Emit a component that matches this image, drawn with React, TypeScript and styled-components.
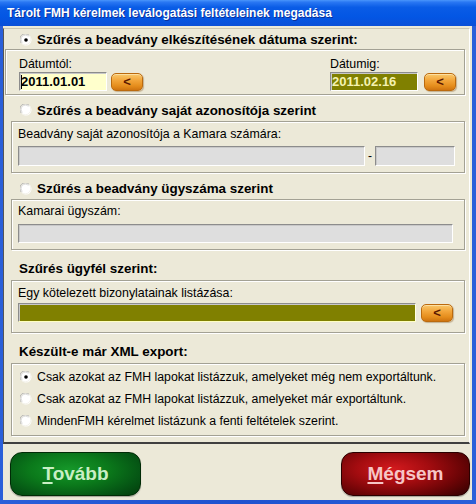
import * as React from "react"
import styled, { createGlobalStyle } from "styled-components"

const GlobalStyle = createGlobalStyle`
body {
    margin: 0;
    font-family: "Liberation Sans", Arial, sans-serif;
}
`

const Window = styled("div")`
width: 476px;
height: 504px;
display: flex;
flex-direction: column;
background: linear-gradient(to right, #2a5fd9, #1f52cf 50%, #2a5fd9);
overflow: hidden;
`

const TitleBar = styled("div")`
height: 26px;
display: flex;
align-items: center;
padding: 0 0 0 7px;
background: linear-gradient(to bottom, #4a96fb 0%, #2a78f3 8%, #0a5ce6 28%, #0356e4 65%, #0a4fd8 100%);
color: #fff;
font-weight: bold;
font-size: 12px;
text-shadow: 1px 1px 0 #0a2f9a;
box-sizing: border-box;
`

const Client = styled("div")`
flex: 1;
margin: 0 4px 4px 3px;
background: #ece9d8;
display: flex;
flex-direction: column;
`

const Panel = styled("div")`
margin: 2px 2px 0 0;
height: 416px;
box-sizing: border-box;
border-top: 1px solid #c9c5b4;
border-left: 1px solid #555;
border-right: 1px solid #fff;
border-bottom: 2px solid #404040;
display: flex;
flex-direction: column;
`

const Header = styled("div")<{ $h: number; $mt: number }>`
height: ${p => p.$h}px;
margin-top: ${p => p.$mt}px;
display: flex;
align-items: center;
gap: 5px;
padding-left: 16px;
font-weight: bold;
font-size: 13.4px;
color: #000;
white-space: nowrap;
`

const PlainHeader = styled(Header)`
padding-left: 15px;
`

const Group = styled("div")<{ $wide?: boolean; $pad: string; $h: number }>`
height: ${p => p.$h}px;
box-sizing: border-box;
margin: 0 4px 0 ${p => (p.$wide ? 1 : 7)}px;
padding: ${p => p.$pad};
border: 1px solid #a3a194;
box-shadow: inset 1px 1px 0 #fff, 1px 1px 0 #fff;
display: flex;
flex-direction: column;
`

const Label = styled("div")`
font-size: 12.4px;
line-height: 15px;
height: 15px;
color: #000;
white-space: nowrap;
`

const Row = styled("div")<{ $gap?: number; $mt?: number }>`
display: flex;
align-items: center;
gap: ${p => p.$gap ?? 4}px;
margin-top: ${p => p.$mt ?? 0}px;
`

const DateRow = styled("div")`
display: flex;
justify-content: space-between;
padding-right: 8px;
`

const Field = styled("div")<{ $tone: "yellow" | "olive" | "off"; $w?: number; $h: number }>`
height: ${p => p.$h}px;
width: ${p => (p.$w ? p.$w + "px" : "auto")};
flex: ${p => (p.$w ? "none" : "1")};
box-sizing: border-box;
border: 1px solid;
border-color: #8c8c8c #ffffff #ffffff #8c8c8c;
box-shadow: inset 1px 1px 0 #c8c8c8;
background: ${p => (p.$tone === "yellow" ? "#ffffcc" : p.$tone === "olive" ? "#808000" : "#dedede")};
color: ${p => (p.$tone === "olive" ? "#f4f2b0" : "#000")};
font-weight: bold;
font-size: 13px;
display: flex;
align-items: center;
padding-left: 1px;
`

const OliveLong = styled(Field)`
border-color: #8c8c8c #ffffe0 #ffffc0 #8c8c8c;
`

const Caret = styled("span")`
display: inline-block;
width: 1px;
height: 14px;
background: #000;
margin-right: -1px;
`

const Dash = styled("span")`
font-size: 12px;
width: 4px;
text-align: center;
`

const PickButton = styled("div")`
width: 32px;
height: 18px;
box-sizing: border-box;
border-radius: 5px;
border: 1px solid #bb6a0e;
background: linear-gradient(to bottom, #f9c86a 0%, #f2a53a 40%, #e58d1c 75%, #cf7410 100%);
box-shadow: 1px 1px 1px rgba(120, 70, 10, 0.35), inset 0 1px 0 rgba(255, 240, 200, 0.6);
color: #5a1800;
font-weight: bold;
font-size: 13px;
line-height: 16px;
text-align: center;
flex: none;
`

const OptionRow = styled("div")`
height: 22px;
display: flex;
align-items: center;
gap: 5px;
padding-left: 7px;
font-size: 12.3px;
color: #000;
white-space: nowrap;
`

const ButtonRow = styled("div")`
margin-top: 8px;
display: flex;
justify-content: space-between;
padding: 0 2px 0 7px;
`

const BigButton = styled("div")<{ $tone: "go" | "stop" }>`
width: ${p => (p.$tone === "go" ? 131 : 129)}px;
height: 44px;
box-sizing: border-box;
border-radius: 12px;
border: 1px solid ${p => (p.$tone === "go" ? "#012b06" : "#2a0000")};
background: ${p =>
    p.$tone === "go"
        ? "radial-gradient(ellipse 75% 90% at 45% 40%, #16982a 0%, #0b7a1b 40%, #055414 75%, #033a0b 100%)"
        : "radial-gradient(ellipse 75% 90% at 40% 38%, #d41a1e 0%, #a40c10 38%, #6c0406 72%, #3a0101 100%)"};
color: ${p => (p.$tone === "go" ? "#c9efc4" : "#f6c6c6")};
font-weight: bold;
font-size: 19px;
display: flex;
align-items: center;
justify-content: center;
box-shadow: 0 1px 1px rgba(0, 0, 0, 0.3);
u {
    text-decoration-thickness: 2px;
    text-underline-offset: 2px;
}
`

const Radio: React.FunctionComponent<{ checked?: boolean }> = ({ checked }) => (
    <svg width="12" height="12" viewBox="0 0 12 12" style={{ flex: "none" }}>
        <circle cx="6" cy="6" r="5.5" fill="#fff" />
        <path d="M1.4 9.2 A5 5 0 0 1 9.2 1.4" fill="none" stroke="#b4b4b4" strokeWidth="1" />
        <path d="M2.4 8.4 A4 4 0 0 1 8.4 2.4" fill="none" stroke="#dcdcdc" strokeWidth="1" />
        <path d="M9.2 1.4 A5 5 0 0 1 1.4 9.2" fill="none" stroke="#f4f2ea" strokeWidth="1" />
        {checked && <circle cx="6" cy="6" r="1.8" fill="#000" />}
    </svg>
)

export default function App() {
    return <>
        <GlobalStyle />
        <Window>
            <TitleBar>Tárolt FMH kérelmek leválogatási feltételeinek megadása</TitleBar>
            <Client>
                <Panel>
                    <Header $h={19} $mt={1}>
                        <Radio checked />
                        Szűrés a beadvány elkészítésének dátuma szerint:
                    </Header>
                    <Group $wide $h={46} $pad="7px 0 3px 13px">
                        <DateRow>
                            <div>
                                <Label>Dátumtól:</Label>
                                <Row>
                                    <Field $tone="yellow" $w={88} $h={19}><Caret />2011.01.01</Field>
                                    <PickButton>&lt;</PickButton>
                                </Row>
                            </div>
                            <div>
                                <Label>Dátumig:</Label>
                                <Row $gap={6}>
                                    <Field $tone="olive" $w={88} $h={19}>2011.02.16</Field>
                                    <PickButton>&lt;</PickButton>
                                </Row>
                            </div>
                        </DateRow>
                    </Group>

                    <Header $h={22} $mt={4}>
                        <Radio />
                        Szűrés a beadvány saját azonosítója szerint
                    </Header>
                    <Group $h={52} $pad="5px 9px 0 6px">
                        <Label>Beadvány saját azonosítója a Kamara számára:</Label>
                        <Row $mt={4} $gap={3}>
                            <Field $tone="off" $h={20} />
                            <Dash>-</Dash>
                            <Field $tone="off" $w={80} $h={20} />
                        </Row>
                    </Group>

                    <Header $h={21} $mt={5}>
                        <Radio />
                        Szűrés a beadvány ügyszáma szerint
                    </Header>
                    <Group $h={51} $pad="4px 11px 0 6px">
                        <Label>Kamarai ügyszám:</Label>
                        <Row $mt={5}>
                            <Field $tone="off" $h={19} />
                        </Row>
                    </Group>

                    <PlainHeader $h={23} $mt={7}>Szűrés ügyfél szerint:</PlainHeader>
                    <Group $h={53} $pad="5px 11px 0 6px">
                        <Label>Egy kötelezett bizonylatainak listázása:</Label>
                        <Row $mt={2} $gap={5}>
                            <OliveLong $tone="olive" $h={19} />
                            <PickButton>&lt;</PickButton>
                        </Row>
                    </Group>

                    <PlainHeader $h={23} $mt={7}>Készült-e már XML export:</PlainHeader>
                    <Group $h={73} $pad="2px 0 0 1px">
                        <OptionRow><Radio checked />Csak azokat az FMH lapokat listázzuk, amelyeket még nem exportáltunk.</OptionRow>
                        <OptionRow><Radio />Csak azokat az FMH lapokat listázzuk, amelyeket már exportáltunk.</OptionRow>
                        <OptionRow><Radio />MindenFMH kérelmet listázunk a fenti feltételek szerint.</OptionRow>
                    </Group>
                </Panel>
                <ButtonRow>
                    <BigButton $tone="go"><span><u>T</u>ovább</span></BigButton>
                    <BigButton $tone="stop"><span><u>M</u>égsem</span></BigButton>
                </ButtonRow>
            </Client>
        </Window>
    </>
}
